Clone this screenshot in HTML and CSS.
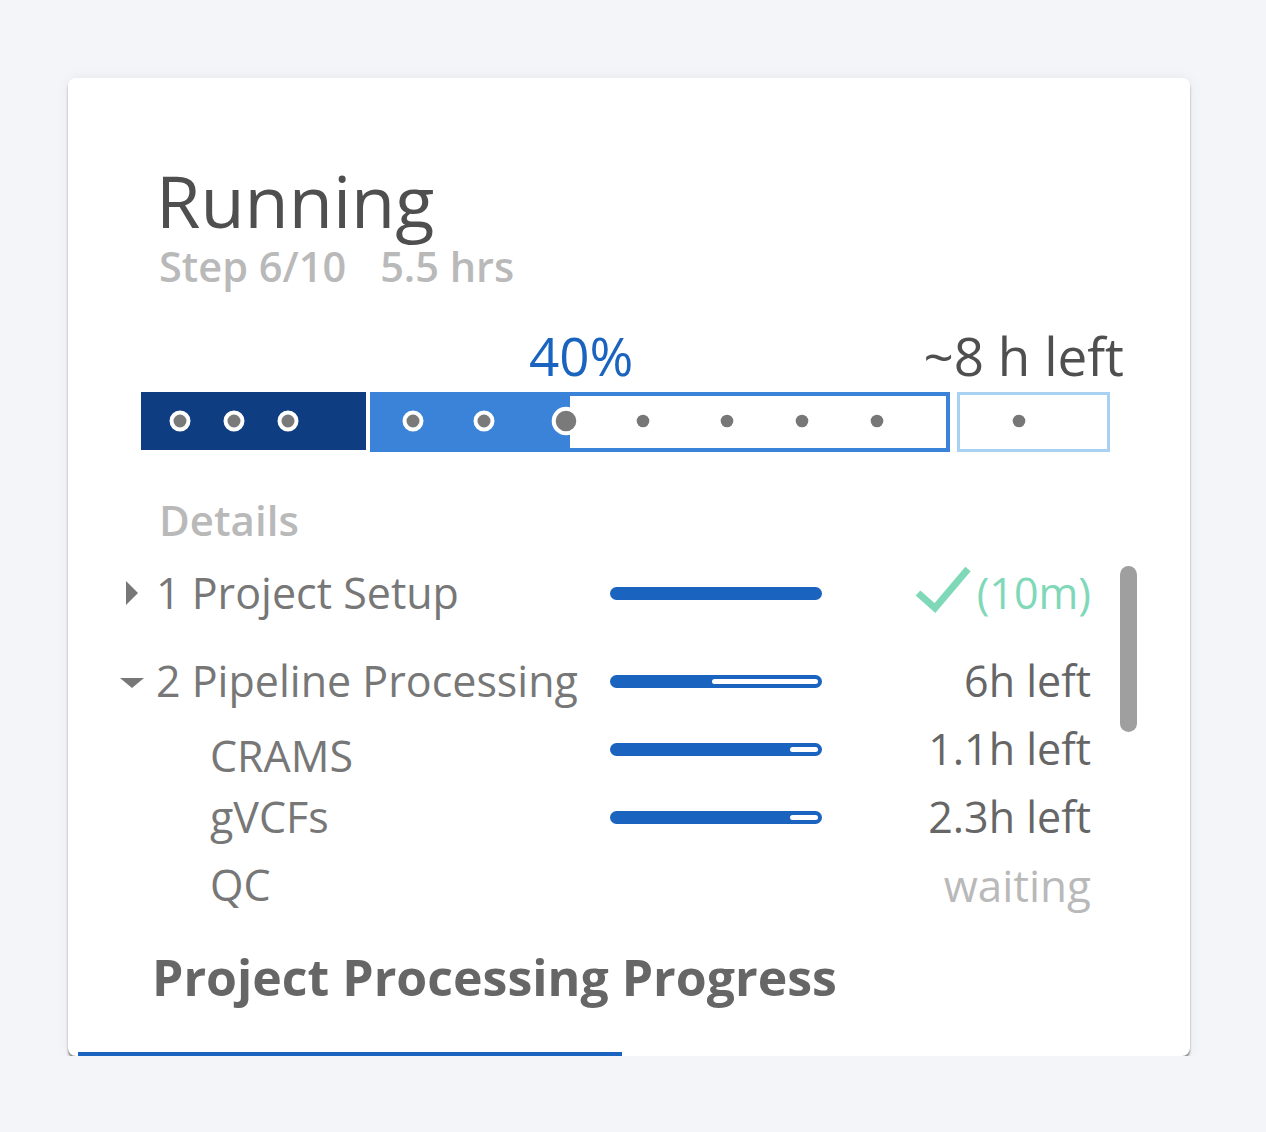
FILE: index.html
```html
<!DOCTYPE html>
<html lang="en">
<head>
<meta charset="utf-8">
<title>Project Processing Progress</title>
<link rel="stylesheet" href="styles.css">
</head>
<body>
<div class="page">
  <div class="card">
    <div class="title">Running</div>
    <div class="sub"><span>Step 6/10</span><span>5.5 hrs</span></div>
    <div class="labels"><span class="pct">40%</span><span class="left">~8 h left</span></div>
    <svg class="bar" width="972" height="62" viewBox="0 0 972 62">
      <rect x="0" y="1" width="225" height="58" fill="#0f3d82"/>
      <rect x="229" y="1" width="580" height="60" fill="#3b83d8"/>
      <rect x="429" y="5" width="376" height="52" fill="#fff"/>
      <rect x="817.5" y="2.5" width="150" height="57" fill="#fff" stroke="#a9d1f4" stroke-width="3"/>
      <g fill="#7a7a7a" stroke="#fff" stroke-width="4">
        <circle cx="39" cy="30" r="8.5"/>
        <circle cx="93" cy="30" r="8.5"/>
        <circle cx="147" cy="30" r="8.5"/>
        <circle cx="272" cy="30" r="8.5"/>
        <circle cx="343" cy="30" r="8.5"/>
        <circle cx="425" cy="30" r="12.3"/>
      </g>
      <g fill="#777">
        <circle cx="502" cy="30" r="6.3"/>
        <circle cx="586" cy="30" r="6.3"/>
        <circle cx="661" cy="30" r="6.3"/>
        <circle cx="736" cy="30" r="6.3"/>
        <circle cx="878" cy="30" r="6.3"/>
      </g>
    </svg>
    <div class="details-title">Details</div>
    <div class="rows">
      <div class="row first">
        <span class="arrow"><span class="tri-right"></span></span>
        <span class="label">1 Project Setup</span>
        <span class="mini"><span class="mini-fill full"></span></span>
        <span class="status done">
          <svg class="check" width="58" height="50" viewBox="0 0 58 50"><path d="M4 29 L21 44 L54 5" fill="none" stroke="#7fd8b8" stroke-width="7"/></svg>
          (10m)
        </span>
      </div>
      <div class="row">
        <span class="arrow"><span class="tri-down"></span></span>
        <span class="label">2 Pipeline Processing</span>
        <span class="mini"><span class="mini-rest" style="width:106px"></span></span>
        <span class="status">6h left</span>
      </div>
      <div class="row sub-row">
        <span class="arrow"></span>
        <span class="label child low">CRAMS</span>
        <span class="mini"><span class="mini-rest" style="width:28px"></span></span>
        <span class="status">1.1h left</span>
      </div>
      <div class="row sub-row">
        <span class="arrow"></span>
        <span class="label child">gVCFs</span>
        <span class="mini"><span class="mini-rest" style="width:28px"></span></span>
        <span class="status">2.3h left</span>
      </div>
      <div class="row sub-row">
        <span class="arrow"></span>
        <span class="label child">QC</span>
        <span class="empty"></span>
        <span class="status waiting">waiting</span>
      </div>
    </div>
    <div class="footer-title">Project Processing Progress</div>
    <div class="scrollbar"></div>
    <div class="bottom-line"></div>
  </div>
</div>
</body>
</html>
```
FILE: styles.css
```css
html, body {
  margin: 0;
  padding: 0;
  background: #f4f5f9;
  font-family: "Open Sans", "Noto Sans", sans-serif;
}

.page {
  padding: 78px 0 0 68px;
}

.card {
  position: relative;
  width: 1122px;
  height: 978px;
  background: #fff;
  border-radius: 8px;
  overflow: hidden;
  box-shadow: 0 3px 2px rgba(0, 0, 0, 0.42), 0 0 14px rgba(0, 0, 0, 0.06);
}

.title {
  margin: 86px 0 0 88px;
  font-size: 72px;
  line-height: 72px;
  color: #4f4f4f;
}

.sub {
  display: flex;
  gap: 34px;
  margin: 10px 0 0 91px;
  font-size: 41.5px;
  line-height: 40px;
  font-weight: 600;
  color: #b9b9b9;
}

.labels {
  display: flex;
  justify-content: space-between;
  width: 595px;
  margin: 44px 0 0 461px;
  font-size: 53px;
  line-height: 52px;
}

.pct {
  color: #1a64c0;
}

.left {
  color: #4f4f4f;
}

.bar {
  display: block;
  margin: 9px 0 0 73px;
}

.details-title {
  margin: 47px 0 0 91px;
  font-size: 42px;
  line-height: 40px;
  font-weight: 600;
  color: #b9b9b9;
}

.rows {
  margin: 19px 0 0 50px;
  width: 973px;
}

.row {
  display: grid;
  grid-template-columns: 38px 454px 212px 1fr;
  align-items: center;
  height: 68px;
  font-size: 43px;
  line-height: 42px;
  color: #777;
}

.row.first {
  margin-bottom: 20px;
}

.arrow {
  display: flex;
  align-items: center;
  height: 42px;
}

.tri-right {
  width: 0;
  height: 0;
  margin-left: 8px;
  border-top: 12px solid transparent;
  border-bottom: 12px solid transparent;
  border-left: 12px solid #777;
}

.tri-down {
  width: 0;
  height: 0;
  margin: 4px 0 0 2px;
  border-left: 12px solid transparent;
  border-right: 12px solid transparent;
  border-top: 10px solid #777;
}

.label {
  white-space: nowrap;
}

.label.child {
  padding-left: 54px;
}

.label.low {
  padding-top: 13px;
}

.mini {
  display: flex;
  justify-content: flex-end;
  box-sizing: border-box;
  height: 13px;
  padding: 4px 4px;
  border-radius: 7px;
  background: #1a64c0;
}

.mini-rest {
  display: block;
  height: 5px;
  border-radius: 3px;
  background: #fff;
}

.status {
  display: flex;
  justify-content: flex-end;
  align-items: center;
  gap: 5px;
  color: #666;
  white-space: nowrap;
}

.status.done {
  color: #7fd8b8;
}

.status.waiting {
  color: #b9b9b9;
  font-size: 44px;
}

.check {
  display: block;
  margin-top: -8px;
}

.footer-title {
  margin: 34px 0 0 84px;
  font-size: 50px;
  line-height: 48px;
  font-weight: 700;
  color: #666;
}

.scrollbar {
  position: absolute;
  left: 1052px;
  top: 488px;
  width: 17px;
  height: 166px;
  border-radius: 9px;
  background: #9f9f9f;
}

.bottom-line {
  position: absolute;
  left: 10px;
  bottom: 0;
  width: 544px;
  height: 4px;
  background: #1a64c0;
}
```
